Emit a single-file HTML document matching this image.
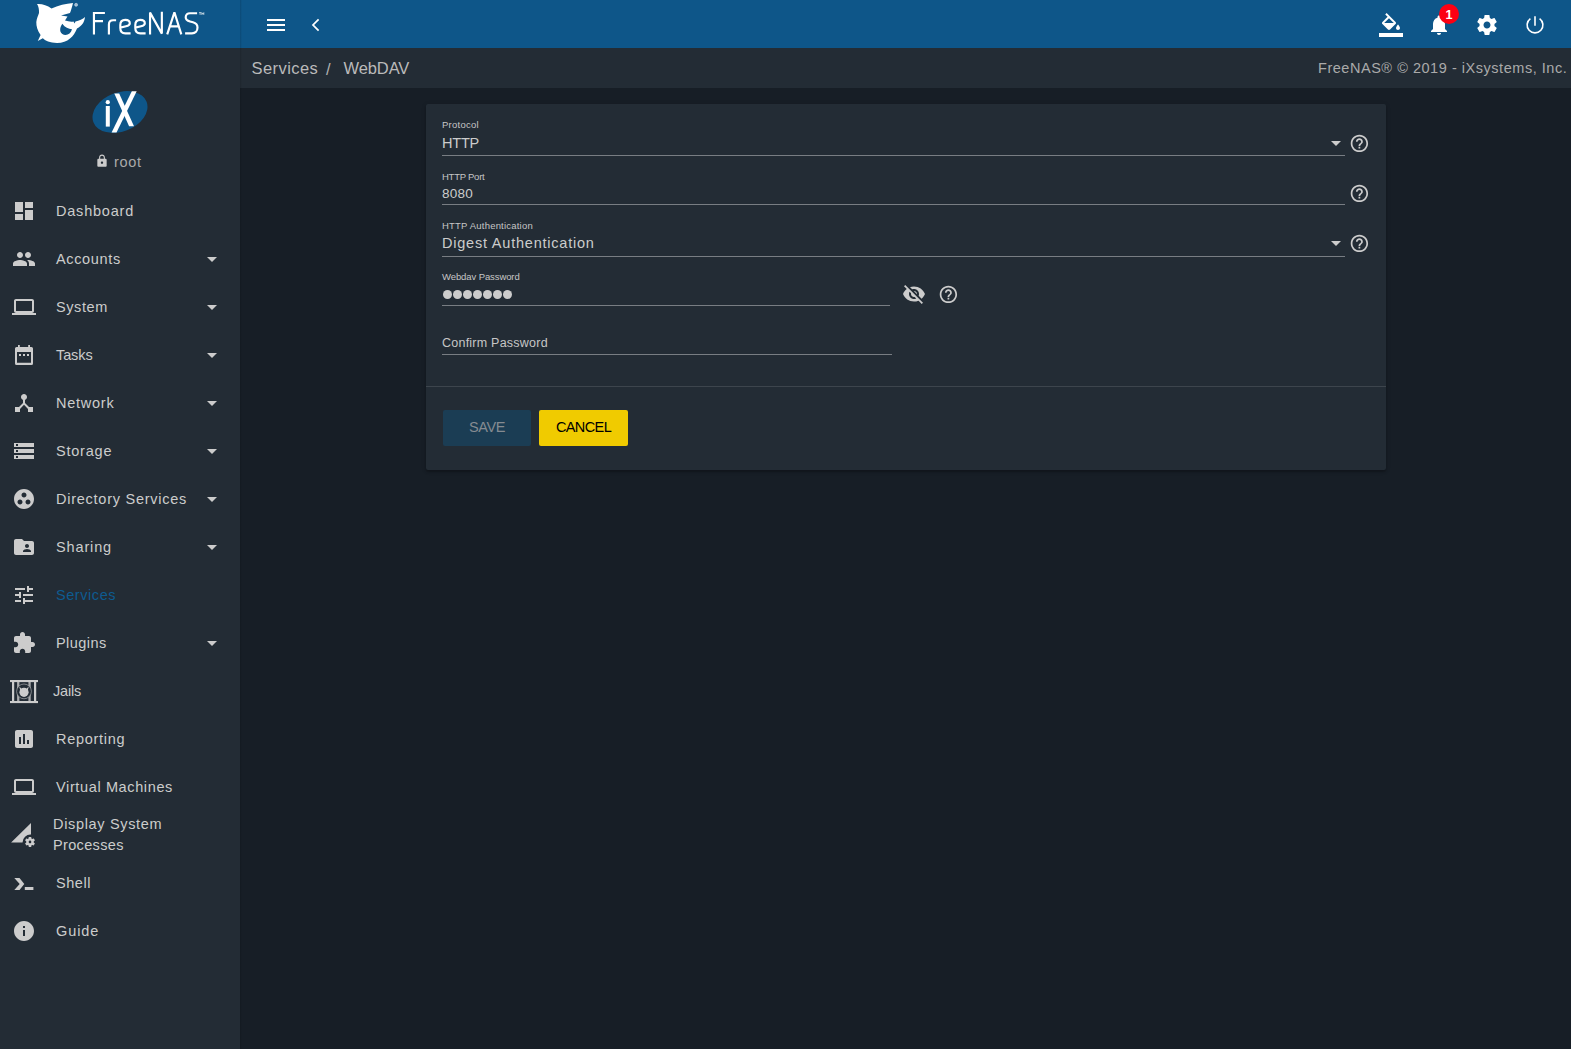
<!DOCTYPE html>
<html><head><meta charset="utf-8">
<style>
*{margin:0;padding:0;box-sizing:border-box}
html,body{width:1571px;height:1049px;overflow:hidden;background:#171e26;font-family:"Liberation Sans",sans-serif;}
.abs{position:absolute}
#top{position:absolute;left:0;top:0;width:1571px;height:48px;background:#0e5689}
#side{position:absolute;left:0;top:48px;width:240px;height:1001px;background:#232c35}
#vline{position:absolute;left:240px;top:0;width:2px;height:1049px;background:linear-gradient(90deg,rgba(0,0,0,.15),rgba(0,0,0,0))}
#crumb{position:absolute;left:240px;top:48px;width:1331px;height:40px;background:#232c35}
.t{position:absolute;white-space:nowrap;line-height:1}
svg{position:absolute;display:block}
.ico{fill:#cccccc}
.nav{position:absolute;left:0;width:240px;height:48px}
.nav .lbl{position:absolute;left:56px;top:0;height:48px;line-height:48px;font-size:14.5px;color:#cccccc;white-space:nowrap}
.nav .car{position:absolute;left:207px;top:22px;width:0;height:0;border-left:5px solid transparent;border-right:5px solid transparent;border-top:5px solid #cccccc}
.nav svg{left:12px;top:12px;width:24px;height:24px}
#card{position:absolute;left:426px;top:104px;width:960px;height:366px;background:#232c35;border-radius:2px;box-shadow:0 2px 2px rgba(0,0,0,.2),0 1px 5px rgba(0,0,0,.14)}
.uline{position:absolute;height:1px;background:#787d83}
.arrow{position:absolute;width:0;height:0;border-left:5px solid transparent;border-right:5px solid transparent;border-top:5px solid #cccccc}
.btn{position:absolute;top:410px;height:36px;border-radius:2px;font-size:14.5px;line-height:34px;text-align:center}
</style></head><body>
<div id="top"></div><div id="side"></div><div id="crumb"></div>
<svg viewBox="0 0 60 48" style="left:30px;top:0;width:60px;height:48px">
<path fill="#fff" d="M7 4 C12 3.6 17 5.2 21.5 8.4 C28 5.5 36 3.6 43 3 C42 7 41 10.5 40 13 L31 15.4 L37.5 16.5 L35 20.5 C38 21.5 41 22 43.5 21.5 L44.5 23.5 L45.5 21.5 C49 20.5 53 19 55 17 C54.5 22 52 26 47 28.5 C44 36 38 43 27 43 C20 43 15 40.5 12.8 38.3 L7.8 40.9 L10.6 35 C7.5 31 6.2 26 6.3 22 C6.8 18 8.2 15.5 9 13 C9.2 9.5 8.5 6 7 4 Z"/>
<path fill="#0e5689" d="M32.3 23.8 C35 27.5 38.5 29 42 29.3 C41 33 38.5 34.9 35.5 34.9 C30.8 34.9 28 30 32.3 23.8 Z"/>
<circle cx="46.1" cy="4.8" r="1.5" fill="#9fbbd3" stroke="#c9d9e6" stroke-width=".6"/>
</svg><svg style="left:0;top:0;width:240px;height:48px" viewBox="0 0 240 48" fill="none" stroke="#fff" stroke-width="2.15">
<path d="M93.95 34.4V12.95H104.9M93.95 21.05H103"/>
<path d="M108.9 34.4V24.5Q108.9 20.2 113.2 20.2H116.1"/>
<path d="M130.6 33.3H125.3C122 33.3 120.3 31.3 120.3 28V25C120.3 21.5 122.3 19.8 125.3 19.8C128 19.8 129.8 21.2 129.8 23.3C129.8 25 128.5 25.8 126 26.3L120.3 27.6"/>
<path transform="translate(15,0)" d="M130.6 33.3H125.3C122 33.3 120.3 31.3 120.3 28V25C120.3 21.5 122.3 19.8 125.3 19.8C128 19.8 129.8 21.2 129.8 23.3C129.8 25 128.5 25.8 126 26.3L120.3 27.6"/>
<path d="M150.05 34.4V12.6L161.85 33.6V11.8" stroke-linejoin="bevel"/>
<path d="M167.2 34.4L174.4 12.3L181.3 34.4M169.4 26.35H179" stroke-linejoin="bevel"/>
<path d="M197.1 13.2H190C187.4 13.2 185.7 15 185.7 17.3C185.7 19.7 187.3 20.8 190 21.5L193 22.3C196 23.1 197.5 24.8 197.5 27.6C197.5 31 195.3 33.3 192 33.3H185.1"/>
<path d="M199 12.6H201.2M200.1 12.6V14.9M201.8 14.9V12.6L202.8 14.2L203.8 12.6V14.9" stroke-width=".75" stroke-opacity=".85"/>
</svg>
<svg viewBox="0 0 24 24" style="left:264px;top:13px;width:24px;height:24px" fill="#fff"><path d="M3 18h18v-2H3v2zm0-5h18v-2H3v2zm0-7v2h18V6H3z"/></svg>
<svg viewBox="0 0 24 24" style="left:303.9px;top:13px;width:24px;height:24px" fill="none" stroke="#fff" stroke-width="1.75"><path d="M14.6 6.4L9 12l5.6 5.6"/></svg>
<svg viewBox="0 0 24 24" style="left:1379px;top:13px;width:24px;height:24px" fill="#fff"><path d="M16.56 8.94L7.62 0 6.21 1.41l2.38 2.38-5.15 5.15c-.59.59-.59 1.54 0 2.12l5.5 5.5c.29.29.68.44 1.06.44s.77-.15 1.06-.44l5.5-5.5c.59-.58.59-1.53 0-2.12zM5.21 10L10 5.21 14.79 10H5.21zM19 11.5s-2 2.17-2 3.5c0 1.1.9 2 2 2s2-.9 2-2c0-1.33-2-3.5-2-3.5z"/><path d="M0 20h24v4H0z"/></svg>
<svg viewBox="0 0 24 24" style="left:1427px;top:13px;width:24px;height:24px" fill="#fff"><path d="M12 22c1.1 0 2-.9 2-2h-4c0 1.1.89 2 2 2zm6-6v-5c0-3.07-1.64-5.64-4.5-6.32V4c0-.83-.67-1.5-1.5-1.5s-1.5.67-1.5 1.5v.68C7.63 5.36 6 7.92 6 11v5l-2 2v1h16v-1l-2-2z"/></svg>
<div class="abs" style="left:1439px;top:4px;width:20px;height:20px;border-radius:50%;background:#fc0013;color:#fff;font-weight:bold;font-size:12.5px;line-height:22px;text-align:center">1</div>
<svg viewBox="0 0 24 24" style="left:1475px;top:13px;width:24px;height:24px" fill="#fff"><path d="M19.43 12.98c.04-.32.07-.64.07-.98s-.03-.66-.07-.98l2.11-1.65c.19-.15.24-.42.12-.64l-2-3.46c-.12-.22-.39-.3-.61-.22l-2.49 1c-.52-.4-1.08-.73-1.69-.98l-.38-2.65C14.46 2.18 14.25 2 14 2h-4c-.25 0-.46.18-.49.42l-.38 2.65c-.61.25-1.17.59-1.69.98l-2.49-1c-.23-.09-.49 0-.61.22l-2 3.46c-.13.22-.07.49.12.64l2.11 1.65c-.04.32-.07.65-.07.98s.03.66.07.98l-2.11 1.65c-.19.15-.24.42-.12.64l2 3.46c.12.22.39.3.61.22l2.49-1c.52.4 1.08.73 1.69.98l.38 2.65c.03.24.24.42.49.42h4c.25 0 .46-.18.49-.42l.38-2.65c.61-.25 1.17-.59 1.69-.98l2.49 1c.23.09.49 0 .61-.22l2-3.46c.12-.22.07-.49-.12-.64l-2.11-1.65zM12 15.5c-1.93 0-3.5-1.57-3.5-3.5s1.57-3.5 3.5-3.5 3.5 1.57 3.5 3.5-1.57 3.5-3.5 3.5z"/></svg>
<svg viewBox="0 0 24 24" style="left:1523px;top:13px;width:24px;height:24px" fill="none" stroke="#fff" stroke-width="1.6"><path d="M12 3.2v9.6"/><path d="M16.6 5.55A7.9 7.9 0 1 1 7.4 5.55"/></svg>
<svg viewBox="0 0 240 60" style="left:0;top:85px;width:240px;height:60px">
<ellipse cx="120" cy="27" rx="28.5" ry="19.5" transform="rotate(-21 120 27)" fill="#0e5689"/>
<rect x="105.8" y="21" width="4" height="20.6" fill="#fff"/><circle cx="107.8" cy="17.2" r="2.1" fill="#fff"/>
<path d="M114.3 8.6 L119.2 8.6 L134 41.2 L129.1 41.2 Z" fill="#fff"/>
<path d="M131.8 6.3 L136.7 6.3 L116.5 47.5 L111.6 47.5 Z" fill="#fff"/>
</svg>
<svg viewBox="0 0 24 24" class="ico" style="left:95.4px;top:154.2px;width:14px;height:14px"><path d="M18 8h-1V6c0-2.76-2.24-5-5-5S7 3.24 7 6v2H6c-1.1 0-2 .9-2 2v10c0 1.1.9 2 2 2h12c1.1 0 2-.9 2-2V10c0-1.1-.9-2-2-2zm-6 9c-1.1 0-2-.9-2-2s.9-2 2-2 2 .9 2 2-.9 2-2 2zm3.1-9H8.9V6c0-1.71 1.39-3.1 3.1-3.1 1.71 0 3.1 1.39 3.1 3.1v2z"/></svg>
<div class="t" style="left:114px;top:154.73px;font-size:14.5px;color:#aaaaaa;letter-spacing:0.667px;">root</div>
<div class="nav" style="top:187px"><svg viewBox="0 0 24 24" class="ico"><path d="M3 13h8V3H3v10zm0 8h8v-6H3v6zm10 0h8V11h-8v10zm0-18v6h8V3h-8z"/></svg><div class="lbl" style="left:56px;color:#cccccc;letter-spacing:0.787px">Dashboard</div></div>
<div class="nav" style="top:235px"><svg viewBox="0 0 24 24" class="ico"><path d="M16 11c1.66 0 2.99-1.34 2.99-3S17.66 5 16 5c-1.66 0-3 1.34-3 3s1.34 3 3 3zm-8 0c1.66 0 2.99-1.34 2.99-3S9.66 5 8 5C6.34 5 5 6.34 5 8s1.34 3 3 3zm0 2c-2.33 0-7 1.17-7 3.5V19h14v-2.5c0-2.330-4.670-3.5-7-3.5zm8 0c-.29 0-.62.02-.97.05 1.16.84 1.970 1.97 1.97 3.45V19h6v-2.5c0-2.33-4.67-3.5-7-3.5z"/></svg><div class="lbl" style="left:56px;color:#cccccc;letter-spacing:0.643px">Accounts</div><div class="car"></div></div>
<div class="nav" style="top:283px"><svg viewBox="0 0 24 24" class="ico"><path d="M20 18c1.1 0 1.99-.9 1.99-2L22 6c0-1.1-.9-2-2-2H4c-1.1 0-2 .9-2 2v10c0 1.1.9 2 2 2H0v2h24v-2h-4zM4 6h16v10H4V6z"/></svg><div class="lbl" style="left:56px;color:#cccccc;letter-spacing:0.600px">System</div><div class="car"></div></div>
<div class="nav" style="top:331px"><svg viewBox="0 0 24 24" class="ico"><path d="M4.5 4h15a1.5 1.5 0 0 1 1.5 1.5v15a1.5 1.5 0 0 1-1.5 1.5h-15A1.5 1.5 0 0 1 3 20.5v-15A1.5 1.5 0 0 1 4.5 4zM5 9v10.8h14V9z"/><rect x="6" y="2" width="1.8" height="3"/><rect x="16.2" y="2" width="1.8" height="3"/><rect x="7" y="11" width="2" height="2"/><rect x="11" y="11" width="2" height="2"/><rect x="15" y="11" width="2" height="2"/></svg><div class="lbl" style="left:56px;color:#cccccc;letter-spacing:-0.100px">Tasks</div><div class="car"></div></div>
<div class="nav" style="top:379px"><svg viewBox="0 0 24 24" class="ico"><path d="M17 16l-4-4V8.82C14.16 8.4 15 7.3 15 6c0-1.66-1.34-3-3-3S9 4.34 9 6c0 1.3.84 2.4 2 2.82V12l-4 4H3v5h5v-3.05l4-4.2 4 4.2V21h5v-5h-4z"/></svg><div class="lbl" style="left:56px;color:#cccccc;letter-spacing:0.750px">Network</div><div class="car"></div></div>
<div class="nav" style="top:427px"><svg viewBox="0 0 24 24" class="ico"><path d="M2 20h20v-4H2v4zm2-3h2v2H4v-2zM2 4v4h20V4H2zm4 3H4V5h2v2zm-4 7h20v-4H2v4zm2-3h2v2H4v-2z"/></svg><div class="lbl" style="left:56px;color:#cccccc;letter-spacing:0.783px">Storage</div><div class="car"></div></div>
<div class="nav" style="top:475px"><svg viewBox="0 0 24 24" class="ico"><path d="M12 2C6.48 2 2 6.48 2 12s4.48 10 10 10 10-4.48 10-10S17.52 2 12 2zM8 17.5c-1.38 0-2.5-1.12-2.5-2.5s1.12-2.5 2.5-2.5 2.5 1.12 2.5 2.5-1.12 2.5-2.5 2.5zM9.5 8c0-1.38 1.12-2.5 2.5-2.5s2.5 1.12 2.5 2.5-1.12 2.5-2.5 2.5S9.5 9.38 9.5 8zm6.5 9.5c-1.38 0-2.5-1.12-2.5-2.5s1.12-2.5 2.5-2.5 2.5 1.12 2.5 2.5-1.12 2.5-2.5 2.5z"/></svg><div class="lbl" style="left:56px;color:#cccccc;letter-spacing:0.747px">Directory Services</div><div class="car"></div></div>
<div class="nav" style="top:523px"><svg viewBox="0 0 24 24" class="ico"><path d="M20 6h-8l-2-2H4c-1.1 0-1.99.9-1.99 2L2 18c0 1.1.9 2 2 2h16c1.1 0 2-.9 2-2V8c0-1.1-.9-2-2-2zm-5 3c1.1 0 2 .9 2 2s-.9 2-2 2-2-.9-2-2 .9-2 2-2zm4 8h-8v-1c0-1.33 2.67-2 4-2s4 .67 4 2v1z"/></svg><div class="lbl" style="left:56px;color:#cccccc;letter-spacing:0.867px">Sharing</div><div class="car"></div></div>
<div class="nav" style="top:571px"><svg viewBox="0 0 24 24" class="ico"><path d="M3 17v2h6v-2H3zM3 5v2h10V5H3zm10 16v-2h8v-2h-8v-2h-2v6h2zM7 9v2H3v2h4v2h2V9H7zm14 4v-2H11v2h10zm-6-4h2V7h4V5h-4V3h-2v6z"/></svg><div class="lbl" style="left:56px;color:#0e5b90;letter-spacing:0.557px">Services</div></div>
<div class="nav" style="top:619px"><svg viewBox="0 0 24 24" class="ico"><path d="M20.5 11H19V7c0-1.1-.9-2-2-2h-4V3.5C13 2.12 11.88 1 10.5 1S8 2.120 8 3.5V5H4c-1.1 0-1.99.9-1.99 2v3.8H3.5c1.49 0 2.7 1.21 2.7 2.7s-1.21 2.7-2.7 2.7H2V20c0 1.1.9 2 2 2h3.8v-1.5c0-1.49 1.21-2.7 2.7-2.7 1.49 0 2.7 1.21 2.7 2.7V22H17c1.1 0 2-.9 2-2v-4h1.5c1.38 0 2.5-1.12 2.5-2.5S21.88 11 20.5 11z"/></svg><div class="lbl" style="left:56px;color:#cccccc;letter-spacing:0.450px">Plugins</div><div class="car"></div></div>
<div class="nav" style="top:667px"><svg viewBox="0 0 28 24" style="left:10px;top:13px;width:28px;height:24px" class="ico">
<rect x="0" y="0" width="28" height="2.1"/><rect x="0" y="21" width="28" height="2.1"/>
<rect x="2" y="2" width="2.2" height="19"/><rect x="24" y="2" width="2.2" height="19"/>
<rect x="7.1" y="2" width="2.3" height="19" fill-opacity=".8"/><rect x="18.4" y="2" width="2.3" height="19" fill-opacity=".8"/>
<circle cx="14" cy="11.4" r="7.4" fill="#232c35" stroke="#cccccc" stroke-opacity=".6" stroke-width=".9"/>
<circle cx="14" cy="12.3" r="4.6"/><path d="M9.3 6.6L12 9.2 10.2 10.6zM18.7 6.6L16 9.2 17.8 10.6z"/>
</svg><div class="lbl" style="left:53px;color:#cccccc;letter-spacing:-0.200px">Jails</div></div>
<div class="nav" style="top:715px"><svg viewBox="0 0 24 24" class="ico"><path d="M19 3H5c-1.1 0-2 .9-2 2v14c0 1.1.9 2 2 2h14c1.1 0 2-.9 2-2V5c0-1.1-.9-2-2-2zM9 17H7v-7h2v7zm4 0h-2V7h2v10zm4 0h-2v-4h2v4z"/></svg><div class="lbl" style="left:56px;color:#cccccc;letter-spacing:0.713px">Reporting</div></div>
<div class="nav" style="top:763px"><svg viewBox="0 0 24 24" class="ico"><path d="M20 18c1.1 0 1.99-.9 1.99-2L22 6c0-1.1-.9-2-2-2H4c-1.1 0-2 .9-2 2v10c0 1.1.9 2 2 2H0v2h24v-2h-4zM4 6h16v10H4V6z"/></svg><div class="lbl" style="left:56px;color:#cccccc;letter-spacing:0.627px">Virtual Machines</div></div>
<div class="nav" style="top:859px"><svg viewBox="0 0 24 24" class="ico"><path d="M2.3 7h5.2l4.8 6-4.8 6H2.3l5.4-6z"/><rect x="12.8" y="16" width="8.6" height="3"/></svg><div class="lbl" style="left:56px;color:#cccccc;letter-spacing:0.550px">Shell</div></div>
<div class="nav" style="top:907px"><svg viewBox="0 0 24 24" class="ico"><path d="M12 2C6.48 2 2 6.48 2 12s4.48 10 10 10 10-4.48 10-10S17.52 2 12 2zm1 15h-2v-6h2v6zm0-8h-2V7h2v2z"/></svg><div class="lbl" style="left:56px;color:#cccccc;letter-spacing:0.925px">Guide</div></div>
<div class="nav" style="top:811px"><svg viewBox="0 0 24 24" style="left:11px;top:12px;width:24px;height:24px" class="ico">
<path d="M0.1 19.6 L20 0 V11.6 A8 8 0 0 0 11.5 19.6 Z"/>
<g transform="translate(13,12.9) scale(0.5)"><path d="M19.43 12.98c.04-.32.07-.64.07-.98s-.03-.66-.07-.98l2.11-1.65c.19-.15.24-.42.12-.64l-2-3.460c-.12-.22-.39-.3-.61-.22l-2.49 1c-.52-.4-1.08-.73-1.69-.98l-.38-2.65C14.46 2.18 14.25 2 14 2h-4c-.25 0-.46.18-.49.42l-.38 2.65c-.61.25-1.17.59-1.69.98l-2.49-1c-.23-.09-.49 0-.61.22l-2 3.46c-.13.22-.07.49.12.64l2.11 1.65c-.04.32-.07.65-.07.98s.03.66.07.98l-2.11 1.65c-.19.15-.24.42-.12.64l2 3.46c.12.22.39.3.61.22l2.49-1c.52.4 1.08.73 1.69.98l.38 2.65c.03.24.24.42.49.42h4c.25 0 .46-.18.49-.42l.38-2.65c.61-.25 1.17-.59 1.69-.98l2.49 1c.23.09.49 0 .61-.22l2-3.46c.12-.22.07-.49-.12-.64l-2.11-1.65zM12 14.6c-1.43 0-2.6-1.17-2.6-2.6s1.17-2.6 2.6-2.6 2.6 1.17 2.6 2.6-1.17 2.6-2.6 2.6z"/></g>
</svg><div class="lbl" style="left:53px;top:0;height:auto;line-height:21px;padding-top:3px;letter-spacing:0.669px">Display System<br><span style="letter-spacing:0.338px">Processes</span></div></div>
<div class="t" style="left:251.5px;top:60.03px;font-size:16.5px;color:#bababa;letter-spacing:0.443px;">Services</div>
<div class="t" style="left:326px;top:60.53px;font-size:16.5px;color:#b0b0b0;letter-spacing:0.000px;">/</div>
<div class="t" style="left:343.5px;top:60.03px;font-size:16.5px;color:#bababa;letter-spacing:-0.100px;">WebDAV</div>
<div class="t" style="left:1318px;top:61.23px;font-size:14.5px;color:#aaaaaa;letter-spacing:0.534px;">FreeNAS® © 2019 - iXsystems, Inc.</div>
<div id="vline"></div>
<div id="card"></div>
<div class="t" style="left:442px;top:120.16px;font-size:9.5px;color:#c6c6c6;letter-spacing:0.243px;">Protocol</div>
<div class="t" style="left:442px;top:135.93px;font-size:14.5px;color:#cccccc;letter-spacing:-0.200px;">HTTP</div>
<div class="uline" style="left:442px;top:155px;width:903px"></div>
<div class="arrow" style="left:1331px;top:141px"></div>
<svg viewBox="0 0 24 24" class="ico" style="left:1348.9px;top:133.1px;width:20.8px;height:20.8px"><path d="M11 18h2v-2h-2v2zm1-16C6.48 2 2 6.48 2 12s4.48 10 10 10 10-4.48 10-10S17.52 2 12 2zm0 18c-4.41 0-8-3.590-8-8s3.59-8 8-8 8 3.59 8 8-3.59 8-8 8zm0-14c-2.21 0-4 1.79-4 4h2c0-1.1.9-2 2-2s2 .9 2 2c0 2-3 1.75-3 5h2c0-2.25 3-2.5 3-5 0-2.21-1.79-4-4-4z"/></svg>
<div class="t" style="left:442px;top:171.96px;font-size:9.5px;color:#c6c6c6;letter-spacing:-0.250px;">HTTP Port</div>
<div class="t" style="left:442px;top:187.17px;font-size:13.5px;color:#cccccc;letter-spacing:0.233px;">8080</div>
<div class="uline" style="left:442px;top:204px;width:903px"></div>
<svg viewBox="0 0 24 24" class="ico" style="left:1348.9px;top:183.1px;width:20.8px;height:20.8px"><path d="M11 18h2v-2h-2v2zm1-16C6.48 2 2 6.48 2 12s4.48 10 10 10 10-4.48 10-10S17.52 2 12 2zm0 18c-4.41 0-8-3.590-8-8s3.59-8 8-8 8 3.59 8 8-3.59 8-8 8zm0-14c-2.21 0-4 1.79-4 4h2c0-1.1.9-2 2-2s2 .9 2 2c0 2-3 1.75-3 5h2c0-2.25 3-2.5 3-5 0-2.21-1.79-4-4-4z"/></svg>
<div class="t" style="left:442px;top:221.06px;font-size:9.5px;color:#c6c6c6;letter-spacing:0.206px;">HTTP Authentication</div>
<div class="t" style="left:442px;top:235.53px;font-size:14.5px;color:#cccccc;letter-spacing:0.785px;">Digest Authentication</div>
<div class="uline" style="left:442px;top:256px;width:903px"></div>
<div class="arrow" style="left:1331px;top:241px"></div>
<svg viewBox="0 0 24 24" class="ico" style="left:1348.9px;top:233.1px;width:20.8px;height:20.8px"><path d="M11 18h2v-2h-2v2zm1-16C6.48 2 2 6.48 2 12s4.48 10 10 10 10-4.48 10-10S17.52 2 12 2zm0 18c-4.41 0-8-3.590-8-8s3.59-8 8-8 8 3.59 8 8-3.59 8-8 8zm0-14c-2.21 0-4 1.79-4 4h2c0-1.1.9-2 2-2s2 .9 2 2c0 2-3 1.75-3 5h2c0-2.25 3-2.5 3-5 0-2.21-1.79-4-4-4z"/></svg>
<div class="t" style="left:442px;top:271.96px;font-size:9.5px;color:#c6c6c6;letter-spacing:-0.093px;">Webdav Password</div>
<div class="abs" style="left:442.6px;top:290px;width:9.3px;height:9.3px;border-radius:50%;background:#cccccc"></div><div class="abs" style="left:452.6px;top:290px;width:9.3px;height:9.3px;border-radius:50%;background:#cccccc"></div><div class="abs" style="left:462.6px;top:290px;width:9.3px;height:9.3px;border-radius:50%;background:#cccccc"></div><div class="abs" style="left:472.6px;top:290px;width:9.3px;height:9.3px;border-radius:50%;background:#cccccc"></div><div class="abs" style="left:482.6px;top:290px;width:9.3px;height:9.3px;border-radius:50%;background:#cccccc"></div><div class="abs" style="left:492.6px;top:290px;width:9.3px;height:9.3px;border-radius:50%;background:#cccccc"></div><div class="abs" style="left:502.6px;top:290px;width:9.3px;height:9.3px;border-radius:50%;background:#cccccc"></div>
<div class="uline" style="left:442px;top:305px;width:448px"></div>
<svg viewBox="0 0 24 24" class="ico" style="left:902px;top:282px;width:24px;height:24px"><path d="M12 7c2.76 0 5 2.24 5 5 0 .65-.13 1.26-.36 1.83l2.92 2.92c1.51-1.26 2.7-2.89 3.43-4.75-1.73-4.39-6-7.5-11-7.5-1.4 0-2.74.25-3.98.7l2.16 2.16C10.74 7.13 11.35 7 12 7zM2 4.27l2.28 2.28.46.46C3.08 8.3 1.78 10.02 1 12c1.73 4.39 6 7.5 11 7.5 1.55 0 3.03-.3 4.380-.84l.42.42L19.73 22 21 20.73 3.27 3 2 4.27zM7.53 9.8l1.55 1.55c-.05.21-.08.43-.08.65 0 1.66 1.34 3 3 3 .22 0 .44-.03.65-.08l1.55 1.55c-.67.33-1.41.53-2.2.53-2.76 0-5-2.24-5-5 0-.79.2-1.53.53-2.2zm4.31-.78l3.15 3.15.02-.16c0-1.66-1.34-3-3-3l-.17.01z"/></svg>
<svg viewBox="0 0 24 24" class="ico" style="left:937.8px;top:284.3px;width:20.8px;height:20.8px"><path d="M11 18h2v-2h-2v2zm1-16C6.48 2 2 6.48 2 12s4.48 10 10 10 10-4.48 10-10S17.52 2 12 2zm0 18c-4.41 0-8-3.590-8-8s3.59-8 8-8 8 3.59 8 8-3.59 8-8 8zm0-14c-2.21 0-4 1.79-4 4h2c0-1.1.9-2 2-2s2 .9 2 2c0 2-3 1.75-3 5h2c0-2.25 3-2.5 3-5 0-2.21-1.79-4-4-4z"/></svg>
<div class="t" style="left:442px;top:337.22px;font-size:12.5px;color:#c6c6c6;letter-spacing:0.233px;">Confirm Password</div>
<div class="uline" style="left:442px;top:354px;width:450px"></div>
<div class="abs" style="left:426px;top:386px;width:960px;height:1px;background:rgba(255,255,255,.12)"></div>
<div class="btn" style="left:443px;width:88px;background:#1b3d54;color:#858b91;letter-spacing:-0.433px">SAVE</div>
<div class="btn" style="left:539px;width:89px;background:#f0cb00;color:#000000;letter-spacing:-0.600px">CANCEL</div>
</body></html>
